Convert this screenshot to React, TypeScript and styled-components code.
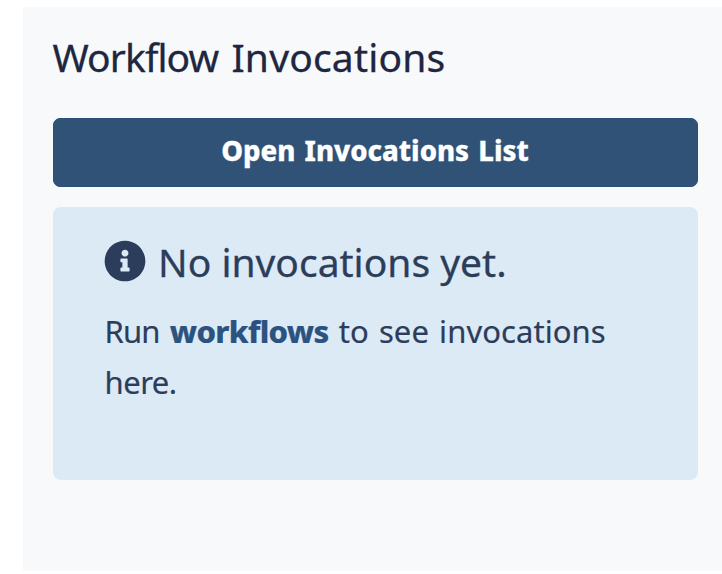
import React from "react";
import styled, { createGlobalStyle } from "styled-components";
import { FaInfoCircle } from "react-icons/fa";

const GlobalStyle = createGlobalStyle`
  * { box-sizing: border-box; }
  body {
    margin: 0;
    background: #ffffff;
    font-family: "Noto Sans", "Open Sans", sans-serif;
    overflow: hidden;
  }
`;

const Page = styled.main`
  height: 574px;
  padding: 7px 0 3px 23px;
`;

const Panel = styled.section`
  display: flex;
  flex-direction: column;
  height: 564px;
  padding: 22px 24.5px 0 29.5px;
  background: #f8f9fb;
`;

const Title = styled.h1`
  margin: 0 0 33px;
  height: 56px;
  line-height: 56px;
  font-size: 39px;
  font-weight: 400;
  word-spacing: 3px;
  white-space: nowrap;
  color: #20263f;
  -webkit-text-stroke: 0.3px currentColor;
`;

const Word = styled.span<{ $spacing: number }>`
  letter-spacing: ${({ $spacing }) => $spacing}px;
`;

const OpenButton = styled.button`
  flex: none;
  height: 69px;
  margin: 0 0 20px;
  padding: 0 0 4px;
  border: 1px solid #2a4f78;
  border-radius: 7px;
  background: #305277;
  color: #ffffff;
  font-family: inherit;
  font-size: 27.5px;
  font-weight: 800;
  letter-spacing: 0;
  word-spacing: 2px;
  white-space: nowrap;
  -webkit-text-stroke: 0.3px currentColor;
`;

const InfoAlert = styled.div`
  flex: none;
  height: 273px;
  padding: 26px 52px 0;
  border-radius: 8px;
  background: #dceaf6;
  color: #2c3d5b;
`;

const AlertHeading = styled.h2`
  display: flex;
  align-items: center;
  gap: 12px;
  height: 56px;
  margin: 0 0 17px;
  font-size: 39px;
  font-weight: 400;
  white-space: nowrap;
  -webkit-text-stroke: 0.3px currentColor;
`;

const InfoIcon = styled(FaInfoCircle)`
  flex: none;
  width: 42px;
  height: 42px;
  margin: -1px 0 0 -0.5px;
`;

const Message = styled.p`
  margin: 0;
  font-size: 31px;
  line-height: 51px;
  word-spacing: 2px;
  white-space: nowrap;
  -webkit-text-stroke: 0.2px currentColor;
`;

const WorkflowLink = styled.a`
  color: #2c5380;
  font-weight: 800;
  letter-spacing: -0.65px;
  text-decoration: none;
`;

export default function App() {
  return (
    <>
      <GlobalStyle />
      <Page>
        <Panel>
          <Title>
            <Word $spacing={-0.9}>Workflow</Word> <Word $spacing={0.2}>Invocations</Word>
          </Title>
          <OpenButton type="button">Open Invocations List</OpenButton>
          <InfoAlert role="status">
            <AlertHeading>
              <InfoIcon aria-hidden="true" />
              <span>No invocations yet.</span>
            </AlertHeading>
            <Message>
              <Word $spacing={-0.8}>Run</Word> <WorkflowLink>workflows</WorkflowLink>{" "}
              <Word $spacing={0.07}>to see invocations</Word>
              <br />
              <Word $spacing={-0.5}>here.</Word>
            </Message>
          </InfoAlert>
        </Panel>
      </Page>
    </>
  );
}
